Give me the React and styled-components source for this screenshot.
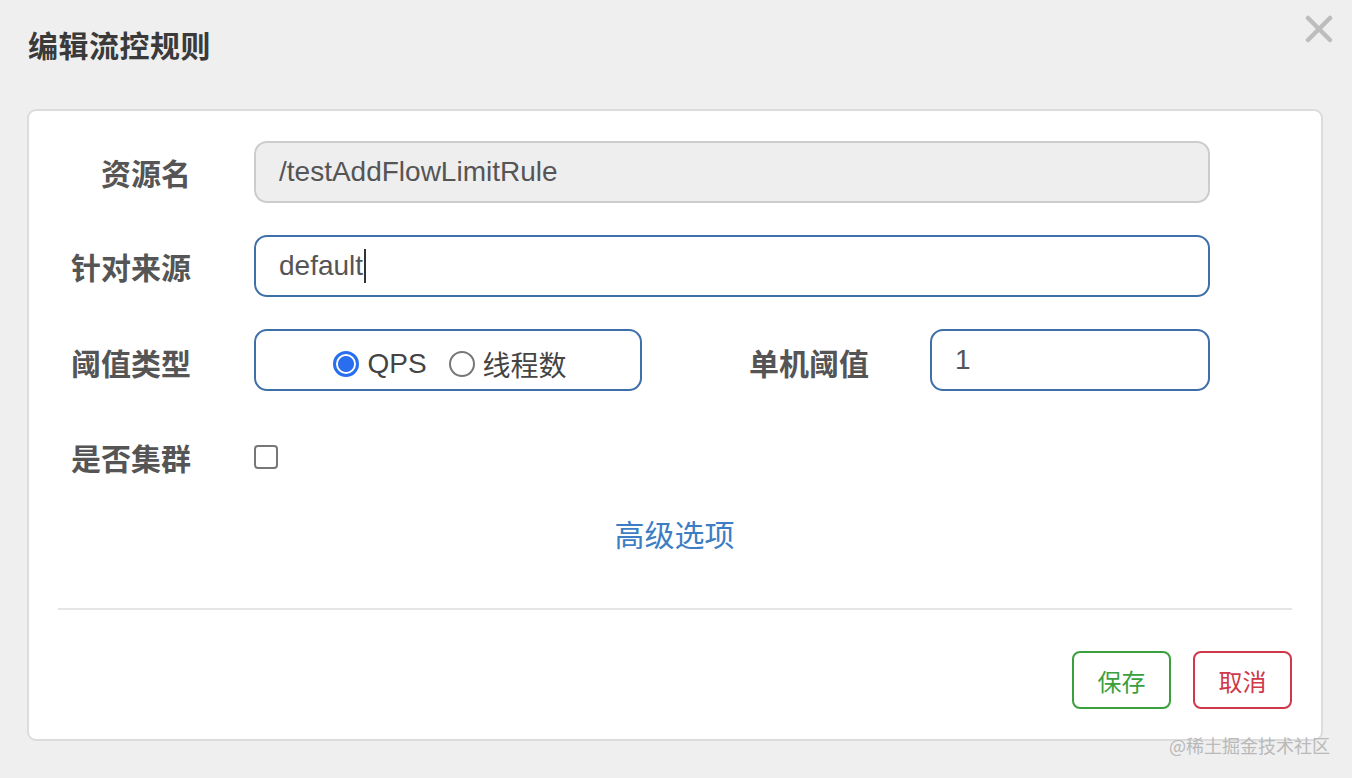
import React from "react";
import styled, { createGlobalStyle, css } from "styled-components";

const GlobalStyle = createGlobalStyle`
  html, body { margin: 0; padding: 0; background: #efefef; }
  body { font-family: "Liberation Sans", "Noto Sans CJK SC", sans-serif; }
  * { box-sizing: border-box; }
`;

const Page = styled.div`
  position: relative;
  width: 1352px;
  height: 778px;
  background: #efefef;
  overflow: hidden;
`;

const Header = styled.div`
  display: flex;
  justify-content: space-between;
  align-items: flex-start;
  height: 109px;
  padding: 24px 19px 0 28px;
`;

const Title = styled.h1`
  margin: 0;
  font-family: "Noto Sans CJK SC", sans-serif;
  font-size: 30px;
  line-height: 40px;
  font-weight: 700;
  color: #3a3a3a;
  letter-spacing: 0.5px;
`;

const CloseButton = styled.button`
  border: 0;
  background: none;
  padding: 0;
  margin-top: -9px;
  width: 28px;
  height: 28px;
  cursor: pointer;
  display: flex;
`;

const Card = styled.div`
  margin: 0 29px 0 27px;
  height: 632px;
  background: #fff;
  border: 2px solid #dcdcdc;
  border-radius: 9px;
  padding: 30px 29px 30px 29px;
  display: flex;
  flex-direction: column;
`;

const Form = styled.div`
  display: flex;
  flex-direction: column;
  gap: 32px;
`;

const Row = styled.div`
  display: flex;
  align-items: center;
  height: 62px;
  padding-right: 82px;
`;

const Label = styled.div`
  width: 133px;
  flex: none;
  text-align: right;
  font-family: "Noto Sans CJK SC", sans-serif;
  font-size: 30px;
  font-weight: 700;
  color: #555;
  margin-right: 63px;
  margin-top: ${(p) => p.$shift || 0}px;
`;

const SideLabel = styled(Label)`
  width: 227px;
  margin-right: 61px;
`;

const Field = styled.div`
  flex: 1;
  height: 62px;
  display: flex;
  align-items: center;
  padding: 0 23px;
  border-radius: 13px;
  font-size: 28px;
  color: #555;
  ${(p) =>
    p.$disabled
      ? css`
          background: #eeeeee;
          border: 2px solid #cccccc;
        `
      : css`
          background: #fff;
          border: 2px solid #3f6fa8;
        `}
`;

const Caret = styled.span`
  display: inline-block;
  width: 2px;
  height: 34px;
  background: #333;
  margin-left: 1px;
`;

const RadioBox = styled.div`
  width: 388px;
  flex: none;
  height: 62px;
  border: 2px solid #3f6fa8;
  border-radius: 13px;
  display: flex;
  align-items: center;
  justify-content: center;
  gap: 22px;
  padding-top: 8px;
  padding-left: 4px;
`;

const RadioOption = styled.label`
  display: flex;
  align-items: center;
  gap: 8px;
  font-size: 28px;
  color: #444;
  font-family: "Liberation Sans", "Noto Sans CJK SC", sans-serif;
`;

const RadioDot = styled.span`
  width: 26px;
  height: 26px;
  border-radius: 50%;
  flex: none;
  ${(p) =>
    p.$checked
      ? css`
          border: 3px solid #2a6ef0;
          background: radial-gradient(circle, #2a6ef0 0 7.5px, #fff 8.5px);
        `
      : css`
          border: 2px solid #777;
          background: #fff;
        `}
`;

const Checkbox = styled.span`
  width: 24px;
  height: 24px;
  border: 2px solid #777;
  border-radius: 4px;
  background: #fff;
  margin-top: 6px;
`;

const AdvancedLink = styled.a`
  display: block;
  margin-top: 28px;
  text-align: center;
  font-family: "Noto Sans CJK SC", sans-serif;
  font-size: 30px;
  line-height: 40px;
  color: #3c7dc4;
  text-decoration: none;
  padding-right: 1px;
`;

const Divider = styled.hr`
  margin: 55px 0 0;
  border: 0;
  height: 2px;
  background: #e5e5e5;
`;

const Footer = styled.div`
  display: flex;
  justify-content: flex-end;
  gap: 22px;
  margin-top: 41px;
`;

const Button = styled.button`
  width: 99px;
  height: 58px;
  border-radius: 8px;
  background: #fff;
  font-family: "Noto Sans CJK SC", sans-serif;
  font-size: 24px;
  border: 2px solid ${(p) => p.$color};
  color: ${(p) => p.$color};
  padding: 0;
  cursor: pointer;
`;

const Watermark = styled.div`
  position: absolute;
  right: 22px;
  top: 732px;
  font-family: "Noto Sans CJK SC", sans-serif;
  font-size: 18px;
  color: #b9b9b9;
`;

export default function App() {
  return (
    <Page>
      <GlobalStyle />
      <Header>
        <Title>编辑流控规则</Title>
        <CloseButton aria-label="close">
          <svg width="28" height="28" viewBox="0 0 28 28">
            <path d="M3 3 L25 25 M25 3 L3 25" stroke="#bdbdbd" strokeWidth="4.5" strokeLinecap="round" />
          </svg>
        </CloseButton>
      </Header>
      <Card>
        <Form>
          <Row>
            <Label>资源名</Label>
            <Field $disabled>/testAddFlowLimitRule</Field>
          </Row>
          <Row>
            <Label>针对来源</Label>
            <Field>
              default
              <Caret />
            </Field>
          </Row>
          <Row>
            <Label $shift={4}>阈值类型</Label>
            <RadioBox>
              <RadioOption>
                <RadioDot $checked />
                QPS
              </RadioOption>
              <RadioOption>
                <RadioDot />
                线程数
              </RadioOption>
            </RadioBox>
            <SideLabel $shift={4}>单机阈值</SideLabel>
            <Field>1</Field>
          </Row>
          <Row>
            <Label $shift={6}>是否集群</Label>
            <Checkbox />
          </Row>
        </Form>
        <AdvancedLink>高级选项</AdvancedLink>
        <Divider />
        <Footer>
          <Button $color="#3aa03e">保存</Button>
          <Button $color="#d0384b">取消</Button>
        </Footer>
      </Card>
      <Watermark>@稀土掘金技术社区</Watermark>
    </Page>
  );
}
